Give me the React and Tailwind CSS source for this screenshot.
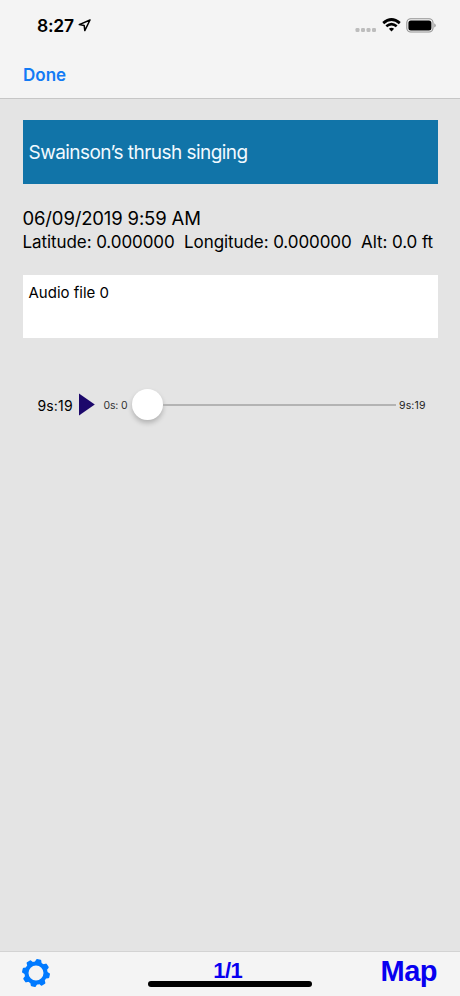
const TEETH = [12, 57, 102, 147, 192, 237, 282, 327];

function StatusBar() {
  return (
    <div className="flex h-[50px] items-center pl-[37px] pr-[24px] text-black">
      <span className="pt-[2px] text-[17.5px] font-semibold leading-[20px] tracking-[-0.25px]">8:27</span>
      <svg className="ml-[4px]" width="13" height="13" viewBox="0 0 13 13" fill="none" stroke="black" strokeWidth="1.5" strokeLinejoin="round">
        <path d="M12 1 1.3 5.6 6.2 6.6 6.8 11.6Z" />
      </svg>
      <svg className="ml-auto mt-[9px]" width="22" height="4" viewBox="0 0 22 4" fill="#bdbdbd">
        {[0.5, 6, 11.5, 17].map((x) => (
          <rect key={x} x={x} width="4" height="4" rx="1.3" />
        ))}
      </svg>
      <svg className="ml-[5px]" width="19" height="14" viewBox="0 0 19 14" fill="none" stroke="black">
        <path d="M1.2 5.1Q9.5-2 17.8 5.1" strokeWidth="2.8" />
        <path d="M4.3 8.3Q9.5 3.9 14.7 8.3" strokeWidth="2.6" />
        <path d="M9.5 13.5 6.9 10.7Q9.5 8.7 12.1 10.7Z" fill="black" stroke="none" />
      </svg>
      <svg className="ml-[5px]" width="30" height="15" viewBox="0 0 30 15">
        <rect x="0.8" y="0.8" width="26.2" height="13.2" rx="4" fill="#f4f4f4" stroke="#929292" strokeWidth="1.1" />
        <rect x="2.4" y="2.4" width="23" height="10" rx="2.5" fill="black" />
        <path d="M28.3 5.2Q29.7 6 29.7 7.4T28.3 9.6Z" fill="#929292" />
      </svg>
    </div>
  );
}

function Gear() {
  return (
    <svg width="28" height="28" viewBox="-14 -14 28 28">
      <circle r="9.5" fill="none" stroke="#007aff" strokeWidth="4" />
      {TEETH.map((a) => (
        <path key={a} d="M10.5-3.5 13.2-2.6Q13.9-2.4 13.9-1.7V1.7Q13.9 2.4 13.2 2.6L10.5 3.5Z" fill="#007aff" transform={`rotate(${a})`} />
      ))}
    </svg>
  );
}

export default function App() {
  return (
    <div className="flex h-[996px] w-[460px] flex-col overflow-hidden bg-[#e4e4e4] font-['Inter','Liberation_Sans',sans-serif] text-black">
      <header className="h-[99px] border-b border-[#c6c6c6] bg-[#f4f4f4]">
        <StatusBar />
        <div className="flex h-[50px] items-center pl-[23px]">
          <button className="text-[17px] font-semibold leading-[20px] text-[#127bf5]">Done</button>
        </div>
      </header>

      <main className="flex-1 px-[22.5px] pt-[21px]">
        <div className="flex h-[64px] items-center bg-[#1174a8] pl-[6px] pt-[3px] text-[19px] text-[#f2faff]">
          <span className="whitespace-nowrap tracking-[-0.55px]">Swainson’s thrush singing</span>
        </div>
        <p className="mt-[22px] whitespace-nowrap text-[18.5px] leading-[24px] tracking-[-0.15px]">06/09/2019 9:59 AM</p>
        <p className="whitespace-pre text-[17px] leading-[24px] tracking-[-0.08px]">{'Latitude: 0.000000  Longitude: 0.000000  Alt: 0.0 ft'}</p>
        <div className="mt-[21px] h-[63px] bg-white px-[6px] pt-[8px] text-[15px] leading-[20px]">Audio file 0</div>

        <div className="mt-[50px] flex h-[32px] items-center pl-[15px]">
          <span className="w-[41px] whitespace-nowrap pt-[2px] text-[14px] tracking-[0.15px]">9s:19</span>
          <svg width="17" height="24" viewBox="0 0 17 24">
            <path d="M0 1.5 15.8 12.5 0 23.5Z" fill="#1c086b" />
          </svg>
          <span className="ml-[8px] w-[28px] whitespace-nowrap pt-[3px] text-[10.5px] tracking-[-0.15px] text-[#333]">0s: 0</span>
          <div className="flex w-[264.5px] items-center">
            <i className="size-[31px] shrink-0 rounded-full bg-white shadow-[0_3px_5px_rgba(0,0,0,0.22)]" />
            <i className="mt-[2px] h-[2px] flex-1 bg-[#b3b3b3]" />
          </div>
          <span className="ml-[3px] whitespace-nowrap pt-[3px] text-[10.5px] tracking-[0.15px] text-[#222]">9s:19</span>
        </div>
      </main>

      <footer className="relative flex h-[45px] items-start justify-between border-t border-[#d3d3d3] bg-[#f4f4f4] pl-[22px] pr-[23px] font-['Liberation_Sans',Arial,sans-serif] font-bold text-[#0800f0]">
        <div className="w-[53px] pt-[7px]"><Gear /></div>
        <span className="pt-[6px] text-[22px] leading-[26px] tracking-[-0.5px]">1/1</span>
        <span className="pt-[2px] text-[29px] leading-[34px] tracking-[-0.5px]">Map</span>
        <div className="absolute bottom-[9px] left-[148px] h-[6px] w-[164px] rounded-full bg-black" />
      </footer>
    </div>
  );
}
